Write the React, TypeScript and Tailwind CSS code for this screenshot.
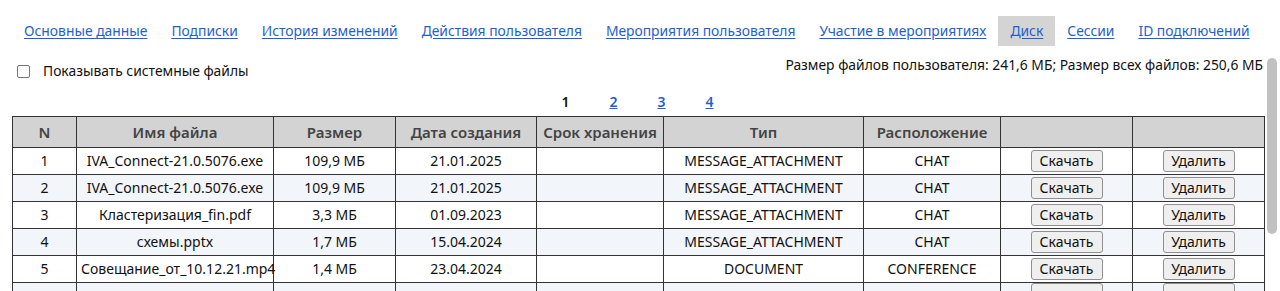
import React from 'react';

type FileRow = {
  n: number | string;
  name: string;
  size: string;
  created: string;
  expires: string;
  type: string;
  location: string;
  blank?: boolean;
};

const tabs = [
  'Основные данные',
  'Подписки',
  'История изменений',
  'Действия пользователя',
  'Мероприятия пользователя',
  'Участие в мероприятиях',
  'Диск',
  'Сессии',
  'ID подключений',
];

const files: FileRow[] = [
  { n: 1, name: 'IVA_Connect-21.0.5076.exe', size: '109,9 МБ', created: '21.01.2025', expires: '', type: 'MESSAGE_ATTACHMENT', location: 'CHAT' },
  { n: 2, name: 'IVA_Connect-21.0.5076.exe', size: '109,9 МБ', created: '21.01.2025', expires: '', type: 'MESSAGE_ATTACHMENT', location: 'CHAT' },
  { n: 3, name: 'Кластеризация_fin.pdf', size: '3,3 МБ', created: '01.09.2023', expires: '', type: 'MESSAGE_ATTACHMENT', location: 'CHAT' },
  { n: 4, name: 'схемы.pptx', size: '1,7 МБ', created: '15.04.2024', expires: '', type: 'MESSAGE_ATTACHMENT', location: 'CHAT' },
  { n: 5, name: 'Совещание_от_10.12.21.mp4', size: '1,4 МБ', created: '23.04.2024', expires: '', type: 'DOCUMENT', location: 'CONFERENCE' },
  // следующая строка видна только верхним краем
  { n: '', name: '', size: '', created: '', expires: '', type: '', location: '', blank: true },
];

const cell = 'border border-[#333] px-1 h-[27px] text-center align-middle';
const btn =
  'w-[72px] h-[22px] bg-[#efefef] border border-[#8f8f8f] rounded-[3px] text-[14px] text-[#111] leading-none';

export default function App() {
  return (
    <div
      className="relative w-[1280px] h-[291px] overflow-hidden bg-white text-[#111]"
      style={{ fontFamily: '"Noto Sans", "Open Sans", Arial, sans-serif' }}
    >
      <div className="w-[1265px]">
        {/* вкладки */}
        <div className="flex pl-3 pt-4 whitespace-nowrap">
          {tabs.map(t => (
            <a
              key={t}
              href="#"
              className={
                'px-3 h-[30px] flex items-center shrink-0 text-[13.85px] text-[#1f5fd1] underline underline-offset-2 ' +
                (t === 'Диск' ? 'bg-[#d4d4d4]' : '')
              }
            >
              {t}
            </a>
          ))}
        </div>

        {/* фильтр и размер */}
        <div className="flex justify-between items-start mt-[8px] pl-[17px] pr-[2px] text-[13.85px]">
          <label className="flex items-center gap-[13px] mt-[7px]">
            <span className="w-[13px] h-[13px] border border-[#767676] rounded-[2px] bg-white" />
            <span>Показывать системные файлы</span>
          </label>
          <div className="mt-[1px]">Размер файлов пользователя: 241,6 МБ; Размер всех файлов: 250,6 МБ</div>
        </div>

        {/* страницы */}
        <div className="flex justify-center gap-[40px] pl-[10px] mt-[9px] text-[14px] font-semibold">
          <span className="text-[#111]">1</span>
          <a href="#" className="text-[#1f5fd1] underline">2</a>
          <a href="#" className="text-[#1f5fd1] underline">3</a>
          <a href="#" className="text-[#1f5fd1] underline">4</a>
        </div>

        {/* таблица */}
        <table className="ml-3 mt-[4px] w-[1252px] border-collapse table-fixed text-[14px]">
          <colgroup>
            <col className="w-[64px]" />
            <col className="w-[197px]" />
            <col className="w-[122px]" />
            <col className="w-[141px]" />
            <col className="w-[127px]" />
            <col className="w-[200px]" />
            <col className="w-[137px]" />
            <col className="w-[132px]" />
            <col className="w-[132px]" />
          </colgroup>
          <thead>
            <tr className="bg-[#d3d3d3] text-[#444] text-[15px] font-semibold">
              {['N', 'Имя файла', 'Размер', 'Дата создания', 'Срок хранения', 'Тип', 'Расположение', '', ''].map((h, i) => (
                <th key={i} className="border border-[#333] h-[31px] px-1 text-center font-semibold whitespace-nowrap">
                  {h}
                </th>
              ))}
            </tr>
          </thead>
          <tbody>
            {files.map((f, i) => (
              <tr key={i} className={i % 2 === 1 ? 'bg-[#f2f5fa]' : 'bg-white'}>
                <td className={cell}>{f.n}</td>
                <td className={cell + ' whitespace-nowrap'}>{f.name}</td>
                <td className={cell}>{f.size}</td>
                <td className={cell}>{f.created}</td>
                <td className={cell}>{f.expires}</td>
                <td className={cell}>{f.type}</td>
                <td className={cell}>{f.location}</td>
                <td className={cell}>
                  <button className={btn}>{f.blank ? '' : 'Скачать'}</button>
                </td>
                <td className={cell}>
                  <button className={btn}>{f.blank ? '' : 'Удалить'}</button>
                </td>
              </tr>
            ))}
          </tbody>
        </table>
      </div>

      {/* полоса прокрутки */}
      <div className="absolute right-[3px] top-[58px] w-[10px] h-[176px] rounded-[5px] bg-[#c1c1c1]" />
    </div>
  );
}
